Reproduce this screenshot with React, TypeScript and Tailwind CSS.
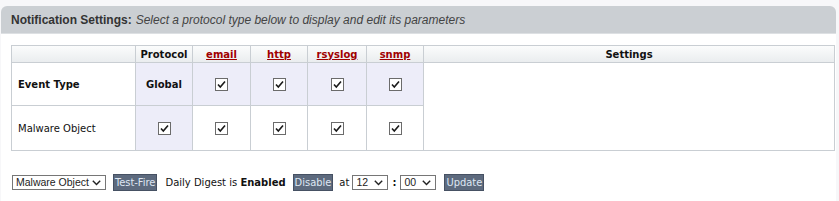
import React from "react";

const Check = () => (
  <span className="inline-flex h-[13px] w-[13px] items-center justify-center border border-[#6b6b6b] bg-white align-middle">
    <svg width="9" height="9" viewBox="0 0 9 9">
      <path d="M1 4.5 L3.3 7 L8 1.5" fill="none" stroke="#1a1a1a" strokeWidth="1.6" />
    </svg>
  </span>
);

const Chevron = () => (
  <svg width="9" height="6" viewBox="0 0 9 6" className="shrink-0">
    <path d="M0.8 0.8 L4.5 4.6 L8.2 0.8" fill="none" stroke="#222" strokeWidth="1.4" />
  </svg>
);

const FakeSelect = ({ label, w }: { label: string; w: string }) => (
  <div
    className={`flex h-[15px] items-center justify-between border border-[#767676] bg-white pl-[3px] pr-[4px] text-[10.5px] leading-none text-[#222] ${w}`}
    style={{ fontFamily: '"Liberation Sans", Arial, sans-serif' }}
  >
    <span>{label}</span>
    <Chevron />
  </div>
);

const Btn = ({ label }: { label: string }) => (
  <div
    className="flex h-[17px] items-center border border-[#465163] bg-[#5d6a7e] px-[1px] text-[11px] leading-none text-[#dfe7f3]"
    style={{ fontFamily: '"DejaVu Sans Condensed", "DejaVu Sans", sans-serif' }}
  >
    {label}
  </div>
);

export default function App() {
  const th = "border border-[#c9ced3] h-[17px] text-center font-bold text-[10px] p-0";
  const td = "border border-[#c9ced3] text-center p-0";
  const link = "text-[#a00000] underline";
  return (
    <div
      className="h-[201px] w-[839px] bg-[#f7f7f9] pl-[1px] pr-[3px] pt-[6px]"
      style={{ fontFamily: '"DejaVu Sans", Verdana, sans-serif' }}
    >
      <div className="flex h-[195px] flex-col">
        <div className="flex h-[28px] items-center rounded-t-[6px] border-b border-[#dde0e3] bg-[#cbcfd3] pl-[10px] pt-[1px] text-[12px] text-[#333]" style={{ fontFamily: '"Liberation Sans", Arial, sans-serif' }}>
          <span className="font-bold">Notification Settings:</span>
          <span className="ml-[4px] italic text-[#444]">Select a protocol type below to display and edit its parameters</span>
        </div>
        <div className="flex-1 bg-white pl-[10px] pr-[1px] pt-[11px]">
          <table className="w-full border-collapse border border-[#c9ced3] text-[10px] text-[#111]">
            <colgroup>
              <col className="w-[124px]" />
              <col className="w-[57px]" />
              <col className="w-[58px]" />
              <col className="w-[57px]" />
              <col className="w-[59px]" />
              <col className="w-[57px]" />
              <col />
            </colgroup>
            <thead>
              <tr className="bg-gradient-to-b from-[#fbfcfc] to-[#e9ecee]">
                <th className={th}></th>
                <th className={th}>Protocol</th>
                <th className={th}><span className={link}>email</span></th>
                <th className={th}><span className={link}>http</span></th>
                <th className={th}><span className={link}>rsyslog</span></th>
                <th className={th}><span className={link}>snmp</span></th>
                <th className={th}>Settings</th>
              </tr>
            </thead>
            <tbody>
              <tr className="h-[43px]">
                <td className="border border-[#c9ced3] pl-[6px] text-left font-bold">Event Type</td>
                <td className={`${td} bg-[#ededf9] font-bold`}>Global</td>
                <td className={`${td} bg-[#ededf9]`}><Check /></td>
                <td className={`${td} bg-[#ededf9]`}><Check /></td>
                <td className={`${td} bg-[#ededf9]`}><Check /></td>
                <td className={`${td} bg-[#ededf9]`}><Check /></td>
                <td className={td} rowSpan={2}></td>
              </tr>
              <tr className="h-[45px]">
                <td className="border border-[#c9ced3] pl-[6px] text-left">Malware Object</td>
                <td className={`${td} bg-[#ededf9]`}><Check /></td>
                <td className={td}><Check /></td>
                <td className={td}><Check /></td>
                <td className={td}><Check /></td>
                <td className={td}><Check /></td>
              </tr>
            </tbody>
          </table>
          <div className="mt-[23px] flex items-center pl-[1px] text-[10px] text-[#111]">
            <FakeSelect label="Malware Object" w="w-[94px]" />
            <div className="ml-[7px]"><Btn label="Test-Fire" /></div>
            <span className="ml-[8px]">Daily Digest is <b>Enabled</b></span>
            <div className="ml-[7px]"><Btn label="Disable" /></div>
            <span className="ml-[6px]">at</span>
            <div className="ml-[3px]"><FakeSelect label="12" w="w-[36px]" /></div>
            <span className="ml-[4px] font-bold">:</span>
            <div className="ml-[4px]"><FakeSelect label="00" w="w-[36px]" /></div>
            <div className="ml-[8px]"><Btn label="Update" /></div>
          </div>
        </div>
      </div>
    </div>
  );
}
